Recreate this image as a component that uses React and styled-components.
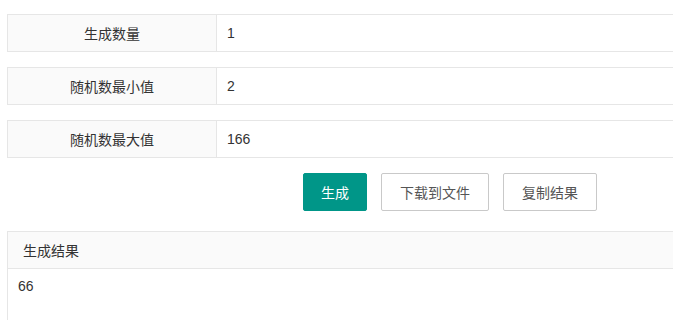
import React from "react";
import styled, { createGlobalStyle } from "styled-components";

const GlobalStyle = createGlobalStyle`
  html, body {
    margin: 0;
    padding: 0;
    background: #fff;
    overflow: hidden;
  }
  body {
    font-family: "Liberation Sans", "Noto Sans CJK SC", sans-serif;
    font-size: 14px;
    color: #333;
  }
`;

const Viewport = styled.div`
  width: 100%;
  height: 320px;
  overflow: hidden;
`;

const Page = styled.div`
  width: 720px;
  padding: 14px 0 0 7px;
`;

const Row = styled.div`
  display: flex;
  height: 38px;
  border: 1px solid #e6e6e6;
  box-sizing: border-box;
  margin-bottom: 15px;
`;

const Label = styled.div`
  width: 209px;
  flex: none;
  display: flex;
  align-items: center;
  justify-content: center;
  background: #fafafa;
  border-right: 1px solid #e6e6e6;
  box-sizing: border-box;
  color: #333;
`;

const Value = styled.div`
  flex: 1;
  display: flex;
  align-items: center;
  padding-left: 10px;
  color: #333;
`;

const Actions = styled.div`
  display: flex;
  gap: 14px;
  padding-left: 296px;
  margin-top: 1px;
  margin-bottom: 20px;
`;

const Button = styled.button`
  height: 38px;
  box-sizing: border-box;
  padding: 0;
  white-space: nowrap;
  width: ${(p) => p.$w}px;
  font-family: inherit;
  font-size: 14px;
  border-radius: 2px;
  cursor: pointer;
  border: 1px solid ${(p) => (p.$primary ? "#009688" : "#c9c9c9")};
  background: ${(p) => (p.$primary ? "#009688" : "#fff")};
  color: ${(p) => (p.$primary ? "#fff" : "#555")};
`;

const Panel = styled.div`
  border: 1px solid #e6e6e6;
  border-bottom: none;
  height: 89px;
  box-sizing: border-box;
`;

const PanelHeader = styled.div`
  height: 36px;
  display: flex;
  align-items: center;
  padding-left: 15px;
  background: #fafafa;
  border-bottom: 1px solid #e6e6e6;
  color: #333;
`;

const PanelBody = styled.div`
  padding: 7px 10px;
  line-height: 20px;
  color: #333;
`;

const fields = [
  ["生成数量", "1"],
  ["随机数最小值", "2"],
  ["随机数最大值", "166"],
];

export default function App() {
  return (
    <Viewport>
      <GlobalStyle />
      <Page>
        {fields.map(([label, value]) => (
          <Row key={label}>
            <Label>{label}</Label>
            <Value>{value}</Value>
          </Row>
        ))}
        <Actions>
          <Button $primary $w={64}>生成</Button>
          <Button $w={108}>下载到文件</Button>
          <Button $w={94}>复制结果</Button>
        </Actions>
        <Panel>
          <PanelHeader>生成结果</PanelHeader>
          <PanelBody>66</PanelBody>
        </Panel>
      </Page>
    </Viewport>
  );
}
